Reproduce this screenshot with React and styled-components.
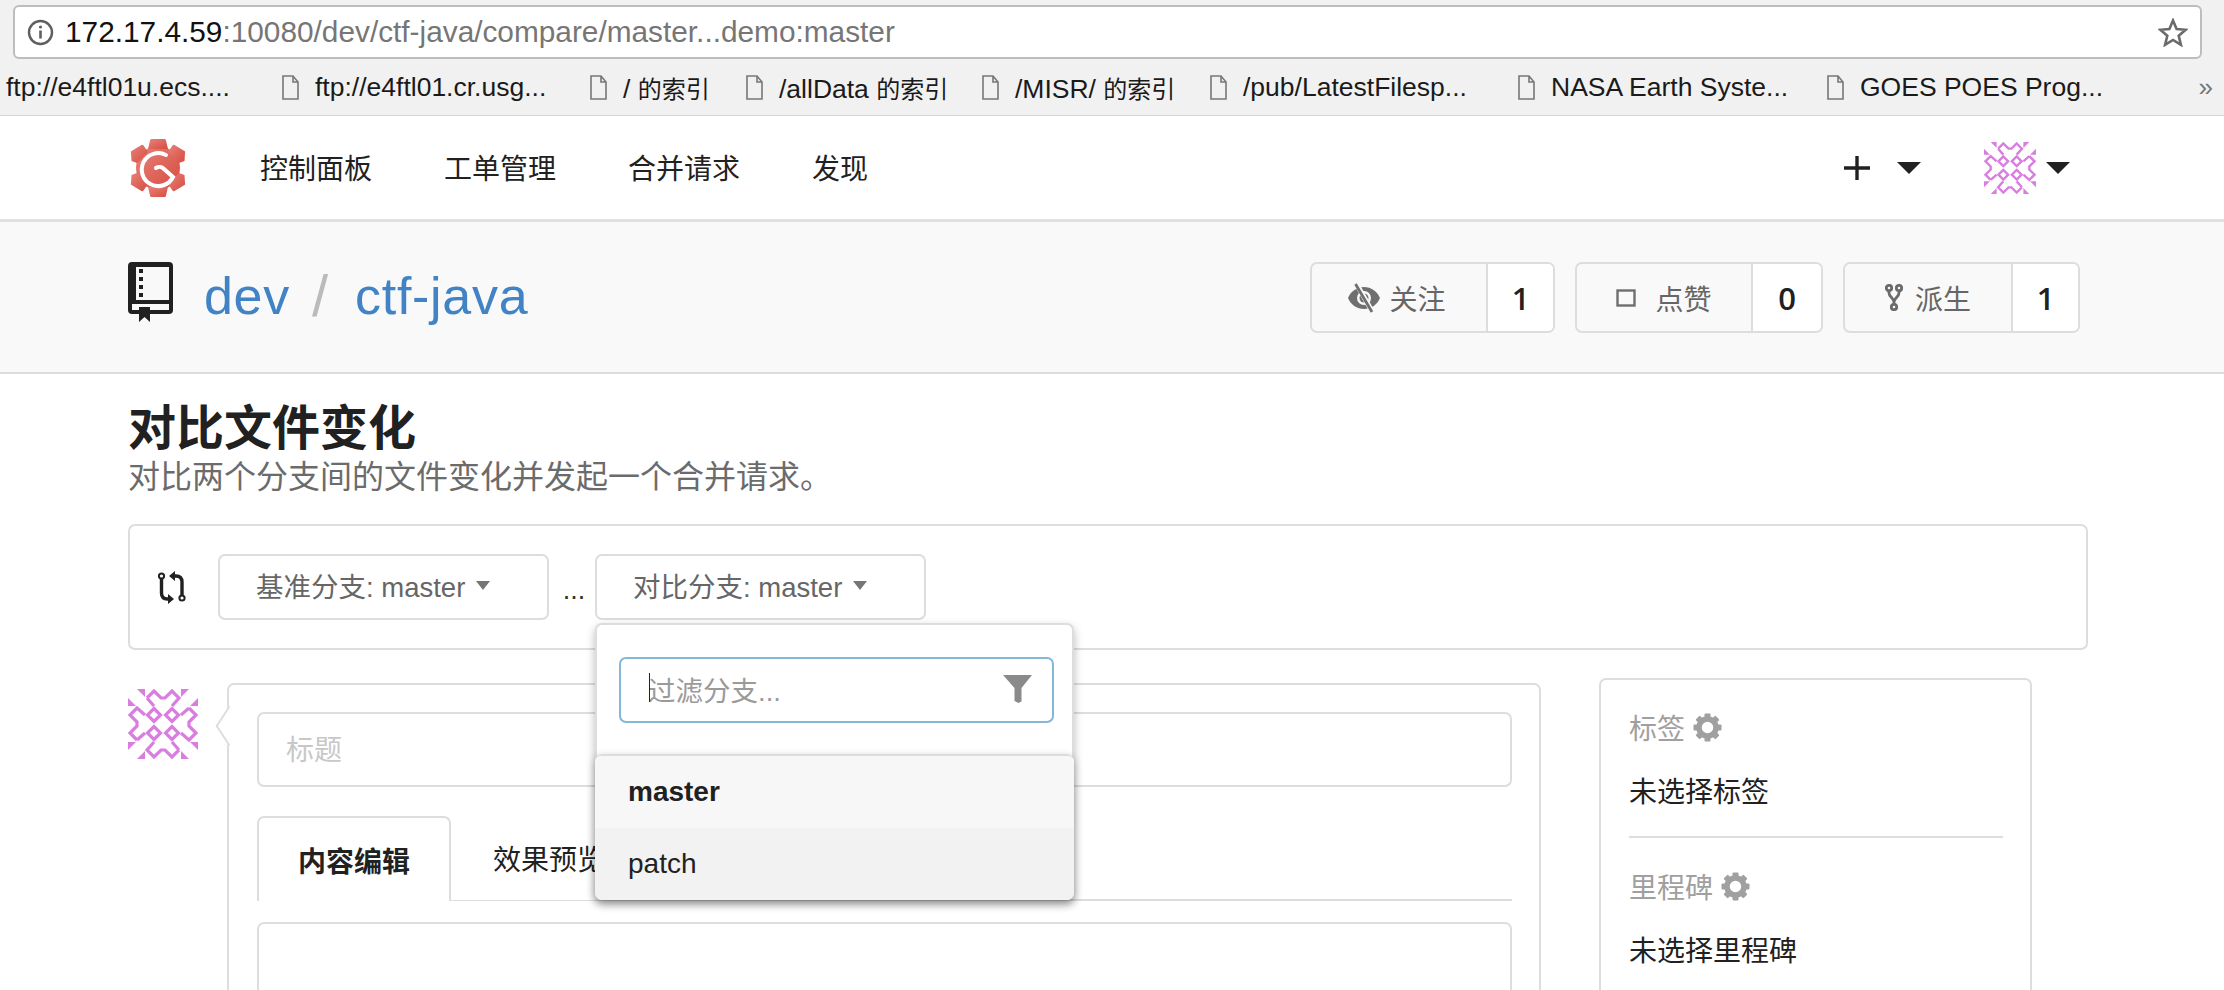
import React from 'react';
import styled, { createGlobalStyle } from 'styled-components';

const LATIN = '"Liberation Sans", "Noto Sans CJK SC", sans-serif';

const GlobalStyle = createGlobalStyle`
  html, body {
    margin: 0;
    padding: 0;
    background: #fff;
    height: 990px;
    overflow: hidden;
  }
  * { box-sizing: border-box; }
  body { font-family: ${LATIN}; color: #212121; }
`;

const bookmarks = [
  { label: 'ftp://e4ftl01u.ecs....', width: 276, noIcon: true },
  { label: 'ftp://e4ftl01.cr.usg...', width: 275 },
  { label: '/ ', suffix: '的索引', width: 123 },
  { label: '/allData ', suffix: '的索引', width: 203 },
  { label: '/MISR/ ', suffix: '的索引', width: 195 },
  { label: '/pub/LatestFilesp...', width: 275 },
  { label: 'NASA Earth Syste...', width: 276 },
  { label: 'GOES POES Prog...', width: 235 },
];

const GearLogo = () => (
  <svg width="56" height="58" viewBox="0 0 56 58">
    <defs>
      <linearGradient id="logoFill" x1="0" y1="0" x2="1" y2="1">
        <stop offset="0" stopColor="#e8827a" />
        <stop offset="1" stopColor="#d64c40" />
      </linearGradient>
    </defs>
    <g fill="url(#logoFill)">
      <path d="M28 29m-22 0a22 22 0 1 0 44 0a22 22 0 1 0-44 0" />
      <path d="M20 1.5q0-1.5 1.5-1.5h13q1.5 0 1.5 1.5L38 10H18z" />
      <path d="M20 56.5q0 1.5 1.5 1.5h13q1.5 0 1.5-1.5L38 48H18z" />
      <path d="M1 14q-.8-1.3.5-2l10-6q1.3-.6 2 .5L18 13 7 24 1.5 22z" />
      <path d="M55 14q.8-1.3-.5-2l-10-6q-1.3-.6-2 .5L38 13l11 11 5.5-2z" />
      <path d="M1 44q-.8 1.3.5 2l10 6q1.3.6 2-.5L18 45 7 34l-5.5 2z" />
      <path d="M55 44q.8 1.3-.5 2l-10 6q-1.3.6-2-.5L38 45l11-11 5.5 2z" />
    </g>
    <path
      fill="none"
      stroke="#fff"
      strokeWidth="4"
      strokeLinecap="round"
      d="M36 16A16.5 16.5 0 1 0 43 38L34 30a6 6 0 0 0-8-1"
    />
  </svg>
);

const IDENTICON_TURNS = [0, 90, 180, 270];

const Identicon = ({ size }) => (
  <svg width={size} height={size} viewBox="0 0 70 70">
    {IDENTICON_TURNS.map((turn) => (
      <g key={turn} transform={`rotate(${turn} 35 35)`}>
        <path fill="#d97ee0" d="M9 0h8v8zM61 0h-8v8z" />
        <path
          fill="none"
          stroke="#d97ee0"
          strokeWidth="3.2"
          d="M19 9l7-7 7 7h4l7-7 7 7-7 8M19 9l7 8M26 19.5l6.500 6.500-6.500 6.500-6.500-6.500z"
        />
      </g>
    ))}
  </svg>
);

const GEAR_ANGLES = [0, 45, 90, 135, 180, 225, 270, 315];

const GearIcon = () => (
  <svg width="29" height="29" viewBox="0 0 29 29">
    <circle cx="14.5" cy="14.5" r="8.5" fill="none" stroke="#a0a0a0" strokeWidth="5.5" />
    {GEAR_ANGLES.map((angle) => (
      <rect
        key={angle}
        x="11.5"
        y="0.5"
        width="6"
        height="6"
        rx="1"
        fill="#a0a0a0"
        transform={`rotate(${angle} 14.5 14.5)`}
      />
    ))}
  </svg>
);

const App = () => (
  <>
    <GlobalStyle />
    <BrowserChrome>
      <AddressBar>
        <svg width="27" height="27" viewBox="0 0 27 27">
          <circle cx="13.5" cy="13.5" r="11.5" fill="none" stroke="#5f5f5f" strokeWidth="2.4" />
          <path d="M13.5 11.5v8" stroke="#5f5f5f" strokeWidth="2.6" />
          <circle cx="13.5" cy="8" r="1.6" fill="#5f5f5f" />
        </svg>
        <UrlText>
          <b>172.17.4.59</b>:10080/dev/ctf-java/compare/master...demo:master
        </UrlText>
        <svg width="30" height="29" viewBox="0 0 30 29">
          <path
            d="M15 2.5l3.6 8.6 9.1.7-7 6 2.2 9-7.9-4.8-7.9 4.8 2.2-9-7-6 9.1-.7z"
            fill="none"
            stroke="#6a6a6a"
            strokeWidth="2.6"
          />
        </svg>
      </AddressBar>
      <BookmarkBar>
        {bookmarks.map((b) => (
          <Bookmark key={b.label}>
            {!b.noIcon && (
              <svg width="17" height="25" viewBox="0 0 17 25">
                <path d="M1 1h10l5 6v17H1z M11 1v6h5" fill="none" stroke="#777" strokeWidth="1.6" />
              </svg>
            )}
            <BookmarkLabel $width={b.width}>
              {b.label}
              {b.suffix && <BookmarkCjk>{b.suffix}</BookmarkCjk>}
            </BookmarkLabel>
          </Bookmark>
        ))}
        <MoreMarks>»</MoreMarks>
      </BookmarkBar>
    </BrowserChrome>

    <NavBar>
      <GearLogo />
      <NavLinks>
        <NavLink>控制面板</NavLink>
        <NavLink>工单管理</NavLink>
        <NavLink>合并请求</NavLink>
        <NavLink>发现</NavLink>
      </NavLinks>
      <NavRight>
        <svg width="26" height="24" viewBox="0 0 26 24">
          <path d="M13 0v24M0 12h26" stroke="#212121" strokeWidth="3.4" />
        </svg>
        <Caret $half={12} $height={12} $color="#212121" $gap={27} />
        <AvatarSlot>
          <Identicon size={52} />
        </AvatarSlot>
        <Caret $half={12} $height={12} $color="#212121" $gap={10} />
      </NavRight>
    </NavBar>

    <RepoHeader>
      <RepoTitle>
        <svg width="45" height="60" viewBox="0 0 45 60">
          <path
            fill="#212121"
            fillRule="evenodd"
            d="M4 0h37a4 4 0 0 1 4 4v44a4 4 0 0 1-4 4H4a4 4 0 0 1-4-4V4a4 4 0 0 1 4-4zM8 5v33h33V5zM4 42v6h37v-6z"
          />
          <path fill="#212121" d="M11 7h4v4h-4zM11 15h4v4h-4zM11 23h4v4h-4zM11 31h4v4h-4z" />
          <path fill="#212121" d="M11 45h11v15l-5.5-5-5.5 5z" />
        </svg>
        <RepoLink>dev</RepoLink>
        <RepoSlash>/</RepoSlash>
        <RepoLink>ctf-java</RepoLink>
      </RepoTitle>
      <RepoActions>
        <LabeledButton>
          <ButtonLabel $width={176} $gap={9}>
            <svg width="32" height="30" viewBox="0 0 32 30">
              <path
                fill="#6f6f6f"
                fillRule="evenodd"
                d="M0 15c3-7 9-11 16-11s13 4 16 11c-3 7-9 11-16 11S3 22 0 15zm16-7a7 7 0 1 0 0 14 7 7 0 0 0 0-14z"
              />
              <circle cx="16" cy="15" r="4.5" fill="#6f6f6f" />
              <path d="M8 0l17 30" stroke="#f9f9f9" strokeWidth="5" />
              <path d="M7.5 1l16.5 28" stroke="#6f6f6f" strokeWidth="2.8" />
            </svg>
            关注
          </ButtonLabel>
          <ButtonCount $width={65}>1</ButtonCount>
        </LabeledButton>
        <LabeledButton>
          <ButtonLabel $width={176} $gap={19}>
            <svg width="20" height="18" viewBox="0 0 20 18">
              <rect x="1.5" y="1.5" width="17" height="15" fill="none" stroke="#6f6f6f" strokeWidth="2.4" />
            </svg>
            点赞
          </ButtonLabel>
          <ButtonCount $width={68}>0</ButtonCount>
        </LabeledButton>
        <LabeledButton>
          <ButtonLabel $width={168} $gap={12}>
            <svg width="18" height="27" viewBox="0 0 18 27">
              <g fill="none" stroke="#6b6b6b" strokeWidth="2.8">
                <circle cx="4" cy="4" r="2.7" />
                <circle cx="14" cy="4" r="2.7" />
                <circle cx="9" cy="23" r="2.7" />
                <path d="M4 7v2c0 4 5 5 5 9v2M14 7v2c0 4-5 5-5 9" />
              </g>
            </svg>
            派生
          </ButtonLabel>
          <ButtonCount $width={65}>1</ButtonCount>
        </LabeledButton>
      </RepoActions>
    </RepoHeader>

    <Main>
      <PageTitle>对比文件变化</PageTitle>
      <PageSubtitle>对比两个分支间的文件变化并发起一个合并请求。</PageSubtitle>

      <CompareBox>
        <svg width="28" height="33" viewBox="0 0 28 33">
          <g fill="none" stroke="#212121">
            <circle cx="3.5" cy="5" r="2.6" strokeWidth="2" />
            <circle cx="24" cy="27" r="2.6" strokeWidth="2" />
            <path strokeWidth="3.4" d="M3.5 8v14c0 4 2 6 6 6h2M24 24V11c0-4-2-6-6-6h-2" />
          </g>
          <path fill="#212121" d="M17 0v10l-6-5zM10 23v10l6-5z" />
        </svg>
        <BranchSelect>
          基准分支: master
          <Caret $half={7.5} $height={9} $color="#767676" $gap={11} />
        </BranchSelect>
        <Dots>...</Dots>
        <DropdownAnchor>
          <BranchSelect>
            对比分支: master
            <Caret $half={7.5} $height={9} $color="#767676" $gap={11} />
          </BranchSelect>
          <BranchMenu>
            <FilterField>
              <Cursor />
              <FilterHint>过滤分支...</FilterHint>
              <svg width="29" height="28" viewBox="0 0 29 28">
                <path fill="#8a8a8a" d="M0 0h29L18.5 13v13.5l-3 1.5-4-2V13z" />
              </svg>
            </FilterField>
            <MenuList>
              <MenuItem $active>master</MenuItem>
              <MenuItem>patch</MenuItem>
            </MenuList>
          </BranchMenu>
        </DropdownAnchor>
      </CompareBox>

      <FormRow>
        <FormAvatar>
          <Identicon size={70} />
        </FormAvatar>
        <FormCard>
          <TitleField>标题</TitleField>
          <Tabs>
            <Tab $active>内容编辑</Tab>
            <Tab>效果预览</Tab>
          </Tabs>
          <EditorBox />
        </FormCard>
        <SideCard>
          <SideHeading>
            标签 <GearIcon />
          </SideHeading>
          <SideValue>未选择标签</SideValue>
          <SideDivider />
          <SideHeading>
            里程碑 <GearIcon />
          </SideHeading>
          <SideValue>未选择里程碑</SideValue>
        </SideCard>
      </FormRow>
    </Main>
  </>
);

const BrowserChrome = styled.div`
  height: 116px;
  background: #f1f1f1;
  border-bottom: 1px solid #d6d6d6;
  padding: 5px 22px 0 13px;
`;

const AddressBar = styled.div`
  height: 54px;
  display: flex;
  align-items: center;
  gap: 11px;
  padding: 0 12px 0 12px;
  background: #fff;
  border: 2px solid #bdbdbd;
  border-radius: 6px;
`;

const UrlText = styled.div`
  flex: 1;
  font-size: 29.8px;
  color: #767676;
  white-space: nowrap;
  b {
    font-weight: 400;
    color: #111;
  }
`;

const BookmarkBar = styled.div`
  height: 56px;
  margin-left: -7px;
  margin-right: -20px;
  display: flex;
  align-items: center;
  position: relative;
`;

const Bookmark = styled.div`
  display: flex;
  align-items: center;
  gap: 16px;
`;

const BookmarkLabel = styled.span`
  width: ${(p) => p.$width}px;
  font-size: 26.5px;
  color: #1a1a1a;
  white-space: nowrap;
`;

const BookmarkCjk = styled.span`
  font-size: 24px;
`;

const MoreMarks = styled.span`
  position: absolute;
  right: 9px;
  font-size: 26px;
  color: #777;
`;

const NavBar = styled.div`
  height: 106px;
  display: flex;
  align-items: center;
  padding: 0 154px 0 130px;
  background: #fff;
  border-bottom: 3px solid #e0e0e0;
`;

const NavLinks = styled.div`
  display: flex;
  gap: 72px;
  margin-left: 74px;
  padding-bottom: 2px;
  flex: 1;
`;

const NavLink = styled.span`
  font-size: 28px;
  color: #212121;
`;

const NavRight = styled.div`
  display: flex;
  align-items: center;
`;

const Caret = styled.i`
  display: inline-block;
  margin-left: ${(p) => p.$gap}px;
  width: 0;
  height: 0;
  border-left: ${(p) => p.$half}px solid transparent;
  border-right: ${(p) => p.$half}px solid transparent;
  border-top: ${(p) => p.$height}px solid ${(p) => p.$color};
`;

const AvatarSlot = styled.span`
  display: flex;
  margin-left: 63px;
`;

const RepoHeader = styled.div`
  height: 152px;
  display: flex;
  align-items: flex-start;
  justify-content: space-between;
  padding: 40px 144px 0 128px;
  background: #f9f9f9;
  border-bottom: 2px solid #dcdcdc;
`;

const RepoTitle = styled.div`
  display: flex;
  align-items: center;
  height: 60px;
`;

const RepoLink = styled.a`
  font-size: 52px;
  letter-spacing: 0.7px;
  color: #4183c4;
  margin-left: 31px;
  line-height: 60px;
  position: relative;
  top: 4px;
  & ~ & {
    margin-left: 27px;
  }
`;

const RepoSlash = styled.span`
  font-size: 58px;
  font-weight: 400;
  color: #bbb;
  margin-left: 22px;
  line-height: 60px;
  position: relative;
  top: 4px;
`;

const RepoActions = styled.div`
  display: flex;
  gap: 20px;
`;

const LabeledButton = styled.div`
  display: flex;
  height: 71px;
  border: 2px solid #ddd;
  border-radius: 7px;
  overflow: hidden;
`;

const ButtonLabel = styled.div`
  width: ${(p) => p.$width}px;
  display: flex;
  align-items: center;
  justify-content: center;
  gap: ${(p) => p.$gap}px;
  padding-right: ${(p) => (p.$gap < 10 ? 4 : 0)}px;
  font-size: 28px;
  color: #666;
  border-right: 2px solid #ddd;
`;

const ButtonCount = styled.div`
  width: ${(p) => p.$width}px;
  display: flex;
  align-items: center;
  justify-content: center;
  background: #fff;
  font-size: 31px;
  font-family: "Open Sans", sans-serif;
  font-weight: 600;
  color: #212121;
`;

const Main = styled.div`
  padding: 0 136px 0 128px;
`;

const PageTitle = styled.h1`
  margin: 25px 0 0;
  font-size: 48px;
  line-height: 60px;
  font-weight: 700;
  color: #212121;
`;

const PageSubtitle = styled.p`
  margin: 0;
  font-size: 32px;
  line-height: 36px;
  color: #6b6b6b;
`;

const CompareBox = styled.div`
  margin-top: 29px;
  height: 126px;
  display: flex;
  align-items: center;
  padding: 0 0 0 28px;
  border: 2px solid #ddd;
  border-radius: 7px;
  svg {
    flex: none;
  }
`;

const BranchSelect = styled.div`
  width: 331px;
  height: 66px;
  display: flex;
  align-items: center;
  padding: 0 0 4px 36px;
  font-size: 27.5px;
  color: #666;
  background: #fff;
  border: 2px solid #ddd;
  border-radius: 7px;
  white-space: nowrap;
  svg + & {
    margin-left: 32px;
  }
`;

const Dots = styled.span`
  width: 46px;
  text-align: center;
  font-size: 27px;
  color: #333;
  padding: 6px 0 0 4px;
`;

const DropdownAnchor = styled.div`
  position: relative;
`;

const BranchMenu = styled.div`
  position: absolute;
  z-index: 5;
  top: 69px;
  left: 0;
  width: 479px;
  padding-top: 32px;
  background: #fff;
  border: 2px solid #ddd;
  border-bottom: 0;
  border-radius: 7px;
  box-shadow: 0 4px 10px rgba(0, 0, 0, 0.28);
`;

const FilterField = styled.div`
  height: 66px;
  margin: 0 18px 0 22px;
  display: flex;
  align-items: center;
  justify-content: space-between;
  padding: 0 20px 3px 27px;
  border: 2px solid #85b7d9;
  border-radius: 7px;
  position: relative;
`;

const Cursor = styled.i`
  position: absolute;
  left: 28px;
  top: 14px;
  width: 1px;
  height: 29px;
  background: #222;
`;

const FilterHint = styled.span`
  font-size: 27.5px;
  color: #9a9a9a;
`;

const MenuList = styled.div`
  margin: 31px -2px 0;
  border-top: 2px solid #dcdcdc;
  border-radius: 7px;
  overflow: hidden;
  box-shadow: 0 3px 8px rgba(0, 0, 0, 0.3);
`;

const MenuItem = styled.div`
  height: 72px;
  display: flex;
  align-items: center;
  padding-left: 33px;
  font-size: 28px;
  color: #212121;
  font-weight: ${(p) => (p.$active ? 700 : 400)};
  background: ${(p) => (p.$active ? '#f7f7f7' : '#f2f2f2')};
`;

const FormRow = styled.div`
  margin-top: 33px;
  display: flex;
  align-items: flex-start;
`;

const FormAvatar = styled.div`
  width: 99px;
  flex: none;
  padding-top: 6px;
`;

const FormCard = styled.div`
  position: relative;
  width: 1314px;
  height: 400px;
  padding: 27px 27px 0 28px;
  border: 2px solid #ddd;
  border-radius: 7px;
  &::before {
    content: '';
    position: absolute;
    left: -12px;
    top: 29px;
    width: 22px;
    height: 22px;
    background: #fff;
    border-left: 2px solid #ddd;
    border-bottom: 2px solid #ddd;
    transform: rotate(45deg) skew(12deg, 12deg);
  }
`;

const TitleField = styled.div`
  height: 75px;
  display: flex;
  align-items: center;
  padding: 0 0 3px 27px;
  font-size: 28px;
  color: #c8c8c8;
  border: 2px solid #ddd;
  border-radius: 7px;
`;

const Tabs = styled.div`
  margin-top: 29px;
  height: 85px;
  display: flex;
  border-bottom: 2px solid #ddd;
`;

const Tab = styled.div`
  width: ${(p) => (p.$active ? '194px' : '196px')};
  height: ${(p) => (p.$active ? '85px' : '84px')};
  display: flex;
  align-items: center;
  justify-content: center;
  font-size: 28px;
  font-weight: ${(p) => (p.$active ? 700 : 400)};
  color: #212121;
  background: #fff;
  ${(p) =>
    p.$active &&
    `
    border: 2px solid #ddd;
    border-bottom: 0;
    border-radius: 7px 7px 0 0;
  `}
`;

const EditorBox = styled.div`
  margin-top: 21px;
  height: 200px;
  border: 2px solid #ddd;
  border-radius: 7px;
`;

const SideCard = styled.div`
  margin-left: 58px;
  width: 433px;
  height: 400px;
  margin-top: -5px;
  padding: 31px 28px 0;
  border: 2px solid #ddd;
  border-radius: 7px;
`;

const SideHeading = styled.div`
  display: flex;
  align-items: center;
  gap: 8px;
  height: 32px;
  font-size: 28px;
  font-weight: 400;
  color: #a0a0a0;
`;

const SideValue = styled.div`
  margin-top: 34px;
  font-size: 28px;
  line-height: 32px;
  color: #212121;
`;

const SideDivider = styled.div`
  height: 2px;
  margin: 27px 0 32px;
  width: 374px;
  background: #ddd;
`;

export default App;
